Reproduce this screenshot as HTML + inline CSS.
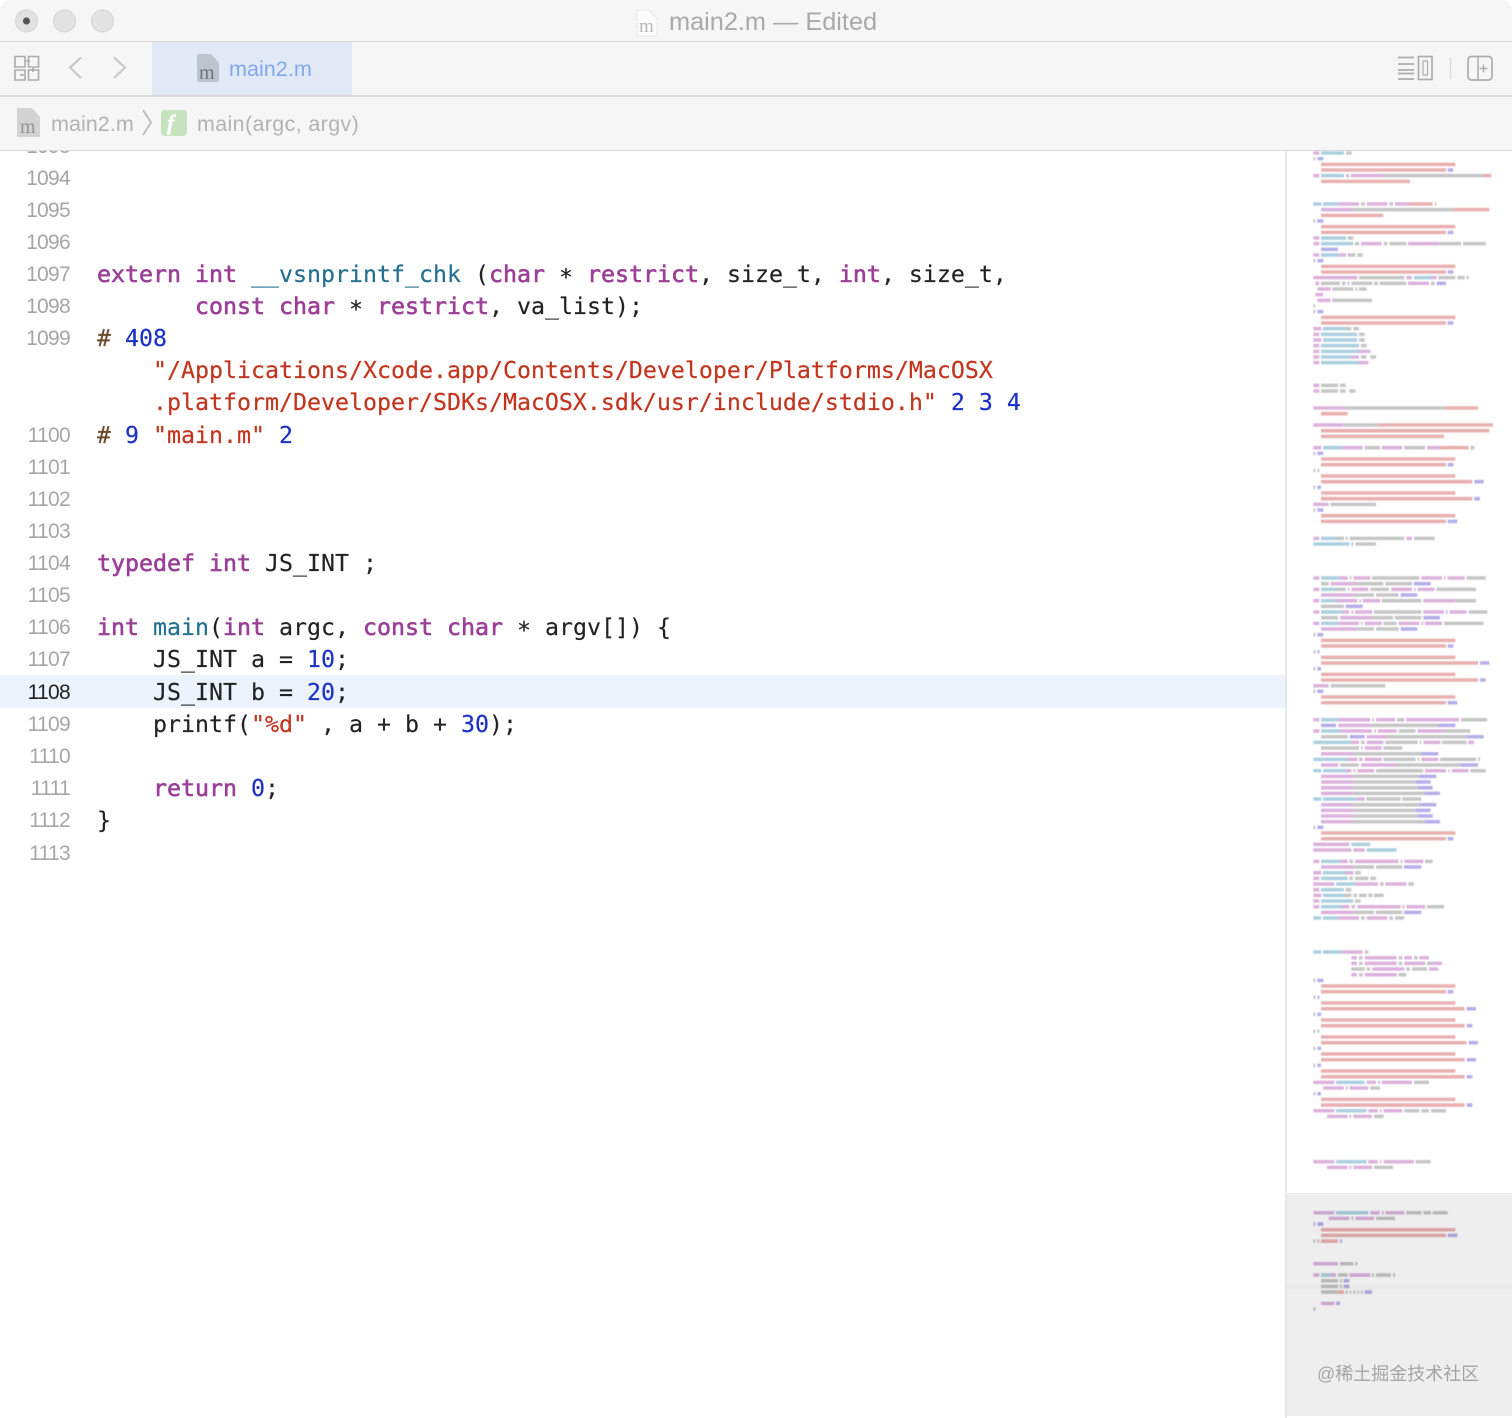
<!DOCTYPE html>
<html lang="en"><head><meta charset="utf-8"><title>main2.m</title>
<style>
html,body{margin:0;padding:0;background:#fff}
body{position:relative;width:1512px;height:1418px;overflow:hidden;font-family:"Liberation Sans","Noto Sans CJK SC",sans-serif}
.n,.c{position:absolute;height:32px;line-height:32px;white-space:pre;margin-top:1px}
.n{left:0;width:70px;text-align:right;font-size:21px;letter-spacing:-.7px;color:#a6a6a6}
.c{left:97px;font-family:"DejaVu Sans Mono","Liberation Mono",monospace;font-size:23.26px;color:#222;-webkit-text-stroke:.15px #222}
.k{color:#9b3f97;-webkit-text-stroke:.6px #9b3f97}
.f{color:#24708f;-webkit-text-stroke:.2px #24708f}
.d{color:#1b32c4;-webkit-text-stroke:.2px #1b32c4}
.s{color:#c2351f;-webkit-text-stroke:.2px #c2351f}
.p{color:#6a4a2c;-webkit-text-stroke:.2px #6a4a2c}
.a{position:relative;top:3px}
#hl{position:absolute;left:0;top:675px;width:1286px;height:33px;background:#ecf3fd}
#head{position:absolute;left:0;top:0;width:1512px;height:150.500px;background:#f6f6f6;border-radius:10px 10px 0 0}
.line{position:absolute;left:0;width:1512px;height:1.500px;background:#d9d9d9}
.tx{position:absolute;white-space:pre;line-height:30px}
#mm{position:absolute;left:1285px;top:151px;width:2px;height:1267px;background:#e6e6e6}
#ov{position:absolute;left:1287px;top:1193px;width:225px;height:223px;background:rgba(0,0,0,.068)}
#band{position:absolute;left:1287px;top:1285px;width:225px;height:4px;background:rgba(0,0,0,.02)}
#wm{position:absolute;left:1317px;top:1361px;font-size:18px;line-height:26px;color:#a4a4a4;white-space:pre}
svg{position:absolute;left:0;top:0}
</style></head><body>
<div id="hl"></div>
<div class="n" style="top:130px">1093</div>
<div class="n" style="top:162px">1094</div>
<div class="n" style="top:194px">1095</div>
<div class="n" style="top:226px">1096</div>
<div class="n" style="top:258px">1097</div>
<div class="c" style="top:258px"><span class="k">extern</span> <span class="k">int</span> <span class="f">__vsnprintf_chk</span> (<span class="k">char</span> <span class="a">*</span> <span class="k">restrict</span>, size_t, <span class="k">int</span>, size_t,</div>
<div class="n" style="top:290px">1098</div>
<div class="c" style="top:290px">       <span class="k">const</span> <span class="k">char</span> <span class="a">*</span> <span class="k">restrict</span>, va_list);</div>
<div class="n" style="top:322px">1099</div>
<div class="c" style="top:322px"><span class="p">#</span> <span class="d">408</span></div>
<div class="c" style="top:354px">    <span class="s">"/Applications/Xcode.app/Contents/Developer/Platforms/MacOSX</span></div>
<div class="c" style="top:386px">    <span class="s">.platform/Developer/SDKs/MacOSX.sdk/usr/include/stdio.h"</span> <span class="d">2 3 4</span></div>
<div class="n" style="top:419px">1100</div>
<div class="c" style="top:419px"><span class="p">#</span> <span class="d">9</span> <span class="s">"main.m"</span> <span class="d">2</span></div>
<div class="n" style="top:451px">1101</div>
<div class="n" style="top:483px">1102</div>
<div class="n" style="top:515px">1103</div>
<div class="n" style="top:547px">1104</div>
<div class="c" style="top:547px"><span class="k">typedef</span> <span class="k">int</span> JS_INT ;</div>
<div class="n" style="top:579px">1105</div>
<div class="n" style="top:611px">1106</div>
<div class="c" style="top:611px"><span class="k">int</span> <span class="f">main</span>(<span class="k">int</span> argc, <span class="k">const</span> <span class="k">char</span> <span class="a">*</span> argv[]) {</div>
<div class="n" style="top:643px">1107</div>
<div class="c" style="top:643px">    JS_INT a = <span class="d">10</span>;</div>
<div class="n" style="top:676px;color:#222">1108</div>
<div class="c" style="top:676px">    JS_INT b = <span class="d">20</span>;</div>
<div class="n" style="top:708px">1109</div>
<div class="c" style="top:708px">    printf(<span class="s">"%d"</span> , a + b + <span class="d">30</span>);</div>
<div class="n" style="top:740px">1110</div>
<div class="n" style="top:772px">1111</div>
<div class="c" style="top:772px">    <span class="k">return</span> <span class="d">0</span>;</div>
<div class="n" style="top:804px">1112</div>
<div class="c" style="top:804px">}</div>
<div class="n" style="top:837px">1113</div>

<div id="head"></div>
<div class="line" style="top:40.500px"></div>
<div class="line" style="top:95px"></div>
<div class="line" style="top:149.800px"></div>
<div style="position:absolute;left:152px;top:42px;width:200px;height:53px;background:#e2e9f6"></div>

<div class="tx" style="left:669px;top:7px;font-size:25.3px;color:#a9a9a9">main2.m — Edited</div>
<div class="tx" style="left:229px;top:54px;font-size:21.6px;color:#80a8ee">main2.m</div>
<div class="tx" style="left:51px;top:109px;font-size:21.6px;color:#b2b2b2">main2.m</div>
<div class="tx" style="left:197px;top:109px;font-size:21.4px;letter-spacing:.4px;color:#b2b2b2">main(argc, argv)</div>

<svg width="1512" height="151" viewBox="0 0 1512 151" fill="none">
<circle cx="26.5" cy="21" r="11" fill="#e2e2e2" stroke="#d4d4d4"/><circle cx="26.5" cy="21" r="3.6" fill="#555"/>
<circle cx="64.5" cy="21" r="11" fill="#e2e2e2" stroke="#d4d4d4"/>
<circle cx="102.5" cy="21" r="11" fill="#e2e2e2" stroke="#d4d4d4"/>
<path d="M637 10h12l8 9v17h-20z" fill="#fbfbfb" stroke="#e8e8e8"/>
<text x="639" y="32" font-family="Liberation Serif" font-size="19" fill="#b8b8b8">m</text>
<g stroke="#ababab" stroke-width="1.6">
<path d="M15 56.500H25V67H15zM28.500 56.500H38.500V67H28.500zM15 70H25V80H15zM28.500 70H38.500V80H28.500zM25 61H30M33 67V72M25 75H20"/>
</g>
<path d="M81 57.500L70 67.500L81 78" stroke="#c9c9c9" stroke-width="2.200"/>
<path d="M114 57.500L125 67.500L114 78" stroke="#c9c9c9" stroke-width="2.200"/>
<path d="M197 54h14l8 9v19h-22z" fill="#bfc4cc"/>
<text x="199" y="79" font-family="Liberation Serif" font-size="20" fill="#70747a">m</text>
<path d="M17 108h15l8 9v20h-23z" fill="#d3d3d3"/>
<text x="20" y="133" font-family="Liberation Serif" font-size="20" fill="#959595">m</text>
<path d="M143 110L151 122.500L143 135" stroke="#bcbcbc" stroke-width="1.800"/>
<rect x="161" y="110" width="26" height="26" rx="4" fill="#c5e3bd"/>
<text x="167" y="130" font-family="Liberation Serif" font-style="italic" font-weight="bold" font-size="22" fill="#fff" stroke="#fff" stroke-width=".4">f</text>
<g stroke="#adadad" stroke-width="1.700">
<path d="M1398 57.500H1414M1398 64H1414M1398 70H1414M1398 73.500H1414M1398 79H1414"/>
<rect x="1418.500" y="56.500" width="13.500" height="23"/>
<rect x="1423" y="61" width="4.500" height="14" stroke-width="1.200"/>
<rect x="1468" y="56.500" width="24" height="23.500" rx="3.500"/>
<path d="M1478 56.500V80M1479.500 68.500H1487.500M1483.500 64.500V72.500" stroke-width="1.500"/>
</g>
<path d="M1450.500 58V79" stroke="#dcdcdc" stroke-width="1.500"/>
</svg>

<div id="mm"></div>
<svg width="1512" height="1418" viewBox="0 0 1512 1418" fill="none" style="filter:blur(.5px)">
<clipPath id="cp"><rect x="1287" y="151" width="225" height="1267"/></clipPath>
<g clip-path="url(#cp)"><g transform="translate(1280,153) scale(.33333,5.667)" stroke-width=".62">
<path stroke="#e9b0b0" d="M123 2H526M123 3H498M612 4H634M123 5H390M390 9H458M520 10H628M123 11H310M123 13H526M123 14H498M123 20H526M123 21H498M123 29H526M123 30H498M495 45H594M123 46H203M295 48H639M123 49H628M123 50H492M481 52H566M123 54H526M123 55H498M123 57H526M123 58H577M123 60H526M123 61H577M123 64H526M123 65H498M123 86H526M123 87H498M123 89H526M123 90H594M123 92H526M123 93H594M123 96H526M123 97H498M123 120H526M123 121H498M123 147H526M123 148H498M123 150H526M123 151H554M123 153H526M123 154H554M123 156H526M123 157H560M123 159H526M123 160H554M123 162H526M123 163H554M123 167H526M123 168H554M123 190H526M123 191H498M123 192H174M174 201H192"/>
<path stroke="#b6aeea" d="M112 1H130M503 3H520M112 12H130M503 14H520M123 17H174M112 19H130M503 21H520M203 23H208M470 23H498M112 28H130M503 30H520M112 53H130M503 55H520M583 58H611M112 59H123M583 61H600M112 63H130M503 65H532M402 76H452M362 78H412M197 80H248M430 82H480M362 84H412M112 85H130M503 87H520M112 88H118M600 90H628M112 91H123M600 93H617M112 95H130M503 97H532M123 101H168M475 101H526M209 103H254M560 103H611M424 106H475M543 108H594M418 110H469M407 111H452M413 112H458M435 113H480M418 115H469M407 116H452M413 117H458M435 118H480M112 119H130M503 121H520M372 126H424M372 134H424M112 146H130M503 148H520M112 149H118M560 151H588M112 152H123M560 154H577M112 158H123M566 157H594M560 160H588M112 161H123M560 163H577M112 166H123M560 168H577M112 189H130M503 191H532M180 192H186M191 199H208M191 200H208M254 201H276M168 203H180"/>
<path stroke="#c6c6c6" d="M198 0H215M100 1H106M198 4H208M313 4H612M243 9H254M328 9H339M464 9H469M220 10H520M100 12H106M203 15H220M225 16H237M311 16H322M328 16H379M475 16H543M549 16H617M203 18H226M232 18H248M100 19H106M237 22H373M475 22H526M532 22H554M560 22H566M123 23H180M186 23H197M214 23H277M282 23H294M299 23H379M453 23H464M157 24H220M226 24H232M237 24H260M157 26H276M100 27H106M100 28H106M197 31H214M220 31H237M237 32H254M237 33H254M243 34H260M243 36H260M271 36H288M123 41H174M180 41H197M123 42H174M180 42H197M208 42H226M197 45H495M190 48H295M254 52H300M373 52H435M571 52H583M100 53H106M100 56H106M112 56H118M100 59H106M152 62H288M100 63H106M168 68H192M197 68H203M209 68H373M402 68H464M214 69H220M226 69H288M209 75H214M276 75H418M492 75H497M560 75H617M123 76H146M230 76H310M316 76H396M168 77H197M203 77H208M271 77H327M402 77H407M469 77H588M220 78H282M288 78H356M305 79H424M526 79H588M238 79H243M123 80H192M214 81H220M282 81H424M498 81H503M566 81H622M123 82H174M277 82H339M345 82H424M243 83H248M310 83H350M424 83H430M492 83H611M230 84H282M288 84H356M100 85H106M100 88H106M100 91H106M152 94H316M100 95H106M277 100H282M351 100H373M543 100H622M270 101H475M282 102H288M356 102H407M492 102H571M123 103H203M320 103H560M243 104H254M316 104H413M419 104H424M486 104H560M123 105H237M243 105H248M310 105H367M220 106H424M237 107H248M310 107H407M413 107H418M480 107H588M594 107H600M180 108H237M350 108H543M220 109H226M288 109H430M505 109H509M571 109H617M220 110H418M220 111H407M220 112H413M220 113H435M259 114H362M367 114H424M220 115H418M220 116H407M220 117H413M220 118H435M100 119H106M208 125H219M362 125H367M435 125H458M220 126H282M288 126H367M225 127H242M208 128H219M225 128H265M271 128H288M300 129H311M385 129H402M197 130H214M192 131H214M220 131H231M237 131H260M265 131H277M282 131H311M225 132H242M214 133H226M367 133H373M441 133H492M220 134H282M288 134H367M243 135H254M328 135H339M345 135H373M254 141H265M237 142H248M356 142H367M402 142H413M237 143H248M356 143H367M441 143H458M214 144H254M260 144H271M379 144H390M396 144H441M237 145H248M356 145H379M100 146H106M100 149H106M100 152H106M100 155H106M112 155H118M100 158H106M100 161H106M294 164H300M402 164H447M197 165H203M271 165H300M100 166H106M300 169H305M373 169H418M424 169H447M453 169H498M208 170H214M282 170H311M300 178H305M407 178H452M208 179H214M282 179H339M305 187H311M379 187H424M430 187H453M458 187H503M214 188H220M288 188H345M100 189H106M100 192H106M112 192H118M180 196H220M226 196H232M174 198H203M276 198H282M288 198H333M339 198H345M123 199H174M180 199H186M123 200H174M180 200H186M123 201H174M197 201H203M209 201H214M220 201H226M232 201H237M243 201H248M100 204H106"/>
<path stroke="#acd0e0" d="M123 0H192M123 4H192M100 9H124M129 9H175M123 15H198M123 16H220M123 18H180M402 22H453M129 31H197M123 32H232M129 33H232M123 34H237M123 35H237M123 36H214M123 37H237M129 52H185M123 68H168M100 69H208M123 75H180M123 77H168M123 79H168M123 81H186M123 83H175M123 100H175M123 102H180M100 104H214M100 107H203M100 109H124M129 109H197M100 114H124M129 114H230M214 122H271M260 123H350M123 125H180M129 127H197M123 128H203M168 129H226M123 130H192M129 131H192M123 132H220M123 133H186M100 135H124M129 135H175M100 141H124M129 141H186M168 164H254M168 169H260M168 178H260M168 187H265M123 198H152"/>
<path stroke="#dcb2dc" d="M100 0H118M100 4H118M213 4H313M175 9H237M260 9H322M345 9H390M123 10H220M100 15H118M100 16H118M243 16H305M384 16H475M100 18H118M180 18H198M100 22H232M379 22H396M453 22H470M106 23H118M384 23H447M112 24H152M106 25H129M112 26H152M100 31H124M100 32H118M100 33H124M100 34H118M100 35H118M237 35H271M100 36H118M214 36H237M100 37H118M237 37H265M100 41H118M100 42H118M100 45H197M100 48H190M100 52H124M185 52H248M305 52H367M441 52H481M100 62H146M100 68H118M379 68H396M180 75H203M220 75H271M424 75H486M503 75H554M100 75H118M152 76H230M100 77H118M214 77H265M333 77H396M413 77H464M123 78H220M100 79H118M168 79H232M248 79H300M430 79H526M100 81H118M186 81H208M225 81H277M430 81H492M509 81H560M180 82H277M100 83H118M175 83H237M254 83H305M356 83H418M435 83H486M123 84H230M100 94H146M100 100H118M175 100H271M288 100H345M379 100H537M175 101H270M100 102H118M180 102H276M294 102H351M413 102H492M260 103H320M214 104H237M260 104H311M430 104H481M565 104H582M254 105H305M123 106H220M203 107H232M254 107H305M424 107H475M123 108H175M243 108H350M197 109H214M232 109H282M435 109H498M515 109H566M123 110H220M123 111H220M123 112H220M123 113H220M230 114H254M123 115H220M123 116H220M123 117H220M123 118H220M100 122H208M100 123H214M220 123H254M100 125H118M180 125H203M225 125H356M373 125H430M123 126H220M100 127H124M197 127H220M100 128H118M100 129H163M226 129H294M316 129H379M100 130H118M100 131H124M100 132H118M100 133H118M186 133H208M232 133H362M379 133H436M123 134H220M175 135H237M260 135H322M186 141H248M214 142H231M254 142H350M373 142H396M418 142H447M214 143H231M254 143H350M373 143H436M458 143H486M277 144H373M447 144H475M214 145H231M254 145H350M100 164H163M260 164H288M305 164H396M129 165H192M208 165H265M100 169H163M265 169H294M311 169H367M141 170H203M220 170H276M100 178H163M265 178H294M311 178H402M141 179H203M220 179H276M100 187H163M271 187H299M316 187H373M146 188H208M226 188H282M100 196H174M100 198H118M152 198H168M208 198H271M123 203H163"/>
</g></g>
</svg>
<div id="ov"></div>
<div id="band"></div>
<div id="wm">@稀土掘金技术社区</div>
</body></html>
